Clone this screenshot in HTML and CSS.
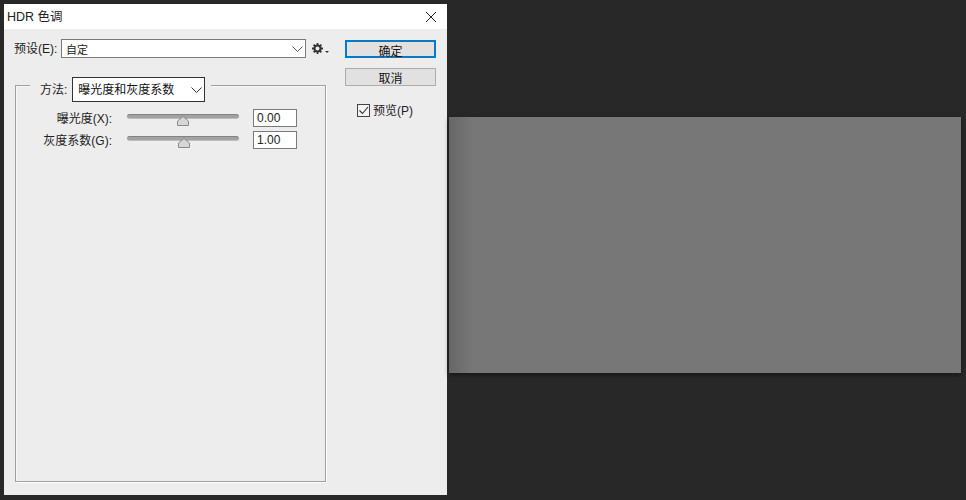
FILE: index.html
```html
<!DOCTYPE html>
<html lang="zh-CN">

<head>
    <meta charset="UTF-8">
    <meta name="viewport" content="width=device-width, initial-scale=1.0">
    <title>HDR 色调</title>
    <link rel="stylesheet" href="styles.css">
</head>

<body>

    <div class="dialog">
        <div class="title-bar">
            <span>HDR 色调</span>
            <svg class="close" width="12" height="12" viewBox="0 0 12 12">
                <path d="M1 1L11 11M11 1L1 11" stroke="#222" stroke-width="1" fill="none" />
            </svg>
        </div>

        <div class="dialog-body">
            <div class="left-col">
                <div class="preset-row">
                    <label class="preset-label">预设(E):</label>
                    <div class="select preset-select">
                        <span>自定</span>
                        <svg width="11" height="6" viewBox="0 0 11 6">
                            <path d="M0.5 0.5L5.5 5.5L10.5 0.5" stroke="#555" fill="none" />
                        </svg>
                    </div>
                    <svg class="gear" width="11" height="11" viewBox="0 0 11 11">
                        <circle cx="5.5" cy="5.5" r="3" stroke="#333" stroke-width="2" fill="none" />
                        <path d="M5.5 0V11M0 5.5H11M1.6 1.6L9.4 9.4M9.4 1.6L1.6 9.4" stroke="#333" stroke-width="1.8" stroke-dasharray="2 7 2" fill="none" />
                    </svg>
                    <span class="gear-caret"></span>
                </div>

                <div class="group">
                    <div class="legend">
                        <label>方法:</label>
                        <div class="select method-select">
                            <span>曝光度和灰度系数</span>
                            <svg width="11" height="6" viewBox="0 0 11 6">
                                <path d="M0.5 0.5L5.5 5.5L10.5 0.5" stroke="#333" fill="none" />
                            </svg>
                        </div>
                    </div>

                    <div class="slider-row">
                        <label class="slider-label">曝光度(X):</label>
                        <div class="slider">
                            <svg class="thumb" style="left: 50px" width="12" height="10" viewBox="0 0 12 10">
                                <path d="M0.5 9.5V5L6 0.5L11.5 5V9.5Z" fill="#d6d6d6" stroke="#8a8a8a" />
                            </svg>
                        </div>
                        <input class="value" type="text" value="0.00">
                    </div>

                    <div class="slider-row">
                        <label class="slider-label">灰度系数(G):</label>
                        <div class="slider">
                            <svg class="thumb" style="left: 51px" width="12" height="10" viewBox="0 0 12 10">
                                <path d="M0.5 9.5V5L6 0.5L11.5 5V9.5Z" fill="#d6d6d6" stroke="#8a8a8a" />
                            </svg>
                        </div>
                        <input class="value" type="text" value="1.00">
                    </div>
                </div>
            </div>

            <div class="right-col">
                <button class="btn btn-default">确定</button>
                <button class="btn">取消</button>
                <div class="preview-check">
                    <span class="checkbox">
                        <svg width="11" height="11" viewBox="0 0 11 11">
                            <path d="M1.5 5.5L4.5 8.5L10 2" stroke="#333" stroke-width="1.1" fill="none" />
                        </svg>
                    </span>
                    <label>预览(P)</label>
                </div>
            </div>
        </div>
    </div>

    <div class="preview-panel"></div>

</body>

</html>
```

FILE: styles.css
```css
* {
    box-sizing: border-box;
}

body {
    margin: 0;
    height: 500px;
    overflow: hidden;
    display: flex;
    align-items: flex-start;
    padding: 4px 0 0 4px;
    background-color: #282828;
    font-family: "Liberation Sans", "Noto Sans CJK SC", sans-serif;
    font-size: 12px;
    color: #222;
}

label {
    padding-bottom: 2px;
}

.dialog {
    width: 443px;
    height: 491px;
    background-color: #ededed;
    flex-shrink: 0;
}

.title-bar {
    height: 25px;
    background-color: #fff;
    display: flex;
    align-items: center;
    justify-content: space-between;
    padding: 0 10px 2px 3px;
    font-size: 12.5px;
}

.close {
    margin-top: 2px;
}

.dialog-body {
    display: flex;
    padding: 10px 0 0 11px;
}

.left-col {
    width: 311px;
}

.preset-row {
    display: flex;
    align-items: center;
    height: 19px;
    margin-left: -1px;
}

.preset-label {
    flex: 0 0 47px;
}

.select {
    display: flex;
    align-items: center;
    justify-content: space-between;
    background-color: #fff;
    border: 1px solid #7a7a7a;
}

.preset-select {
    flex: 0 0 245px;
    height: 19px;
    padding: 0 2px 0 4px;
    font-size: 11px;
}

.gear {
    flex-shrink: 0;
    margin-left: 6px;
}

.gear-caret {
    flex-shrink: 0;
    width: 0;
    height: 0;
    margin: 7px 0 0 2px;
    border-left: 2px solid transparent;
    border-right: 2px solid transparent;
    border-top: 2px solid #333;
}

.group {
    height: 397px;
    margin-top: 27px;
    border: 1px solid #a0a0a0;
    box-shadow: 1px 1px 0 #fff, inset 1px 1px 0 #f7f7f7;
}

.legend {
    display: inline-flex;
    align-items: center;
    gap: 5px;
    margin: -9px 0 0 14px;
    padding: 0 6px 0 10px;
    background-color: #ededed;
    vertical-align: top;
}

.method-select {
    width: 133px;
    height: 25px;
    padding: 0 2px 0 5px;
    border-color: #333;
    color: #111;
}

.method-select span {
    padding-bottom: 2px;
}

.slider-row {
    display: flex;
    align-items: center;
    height: 18px;
    margin-top: 4px;
}

.legend + .slider-row {
    margin-top: 7px;
}

.slider-label {
    width: 96px;
    text-align: right;
}

.slider {
    position: relative;
    width: 112px;
    height: 5px;
    margin: 0 14px 4px 15px;
    border-radius: 3px;
    background-color: #a2a2a2;
    border-top: 1px solid #828282;
    border-bottom: 1px solid #bdbdbd;
}

.thumb {
    position: absolute;
    top: 1px;
}

.value {
    width: 44px;
    height: 18px;
    padding: 0 3px;
    border: 1px solid #7a7a7a;
    border-radius: 0;
    outline: none;
    background-color: #fff;
    font-family: "Liberation Sans", sans-serif;
    font-size: 12px;
    color: #222;
}

.right-col {
    display: flex;
    flex-direction: column;
    gap: 10px;
    width: 91px;
    margin-left: 19px;
    padding-top: 1px;
}

.btn {
    height: 18px;
    padding: 0 0 2px;
    border: 1px solid #adadad;
    background-color: #e1e1e1;
    font-family: inherit;
    font-size: 12px;
    color: #111;
}

.btn-default {
    border: 2px solid #0a78c8;
}

.preview-check {
    display: flex;
    align-items: center;
    gap: 3px;
    margin: 5px 0 0 12px;
}

.checkbox {
    display: flex;
    width: 13px;
    height: 13px;
    border: 1px solid #444;
    background-color: #f4f4f4;
}

.preview-panel {
    width: 512px;
    height: 256px;
    margin: 113px 0 0 2px;
    flex-shrink: 0;
    background: linear-gradient(to right, #676767, #777 24px);
    box-shadow: 0 2px 5px rgba(0, 0, 0, 0.45);
}
```
